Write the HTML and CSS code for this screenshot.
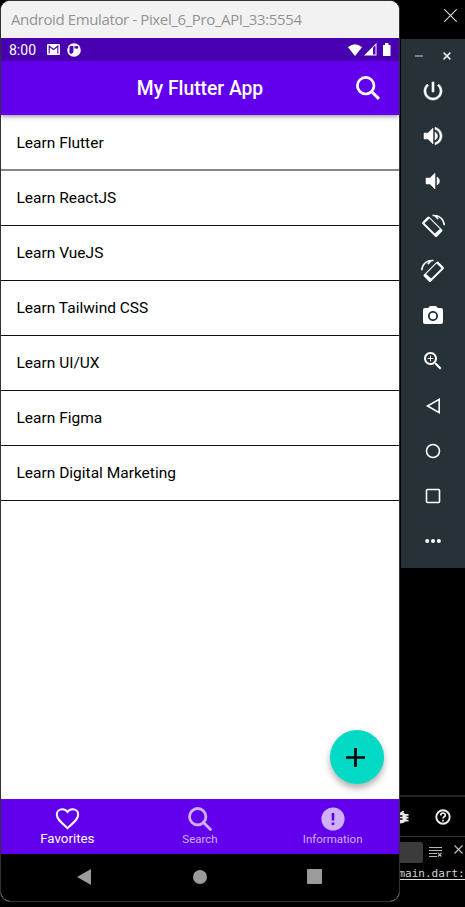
FILE: index.html
```html
<!DOCTYPE html>
<html lang="en">
<head>
<meta charset="utf-8">
<title>Android Emulator</title>
<link rel="stylesheet" href="styles.css">
</head>
<body>
<div class="desktop">
  <main class="phone">
    <header class="titlebar"><span>Android Emulator - Pixel_6_Pro_API_33:5554</span></header>
    <div class="status">
      <span class="clock">8:00</span>
      <svg class="mail" width="13" height="11" viewBox="0 0 13 11"><rect width="13" height="11" rx="1" fill="#fff"/><path d="M2.200 9.500V2.200L6.500 5.500l4.300-3.300v7.300" fill="none" stroke="#4800b0" stroke-width="1.100"/></svg>
      <svg class="badge" width="14" height="14" viewBox="0 0 14 14"><circle cx="7" cy="7" r="6.800" fill="#fff"/><path d="M2.500 4.300Q2.500 3 4 3H6.400V8.200A2.300 2.300 0 0 1 2.500 10Z" fill="#4800b0"/><path d="M7.500 3H8.700V5.500H7.500Z" fill="#4800b0"/><circle cx="9.800" cy="4.400" r="1.400" fill="#4800b0"/></svg>
      <span class="fill"></span>
      <svg width="14" height="12" viewBox="0 0 14 12"><path d="M7 12 0 3.300Q7-2.600 14 3.300Z" fill="#fff"/></svg>
      <svg class="signal" width="13" height="13" viewBox="0 0 13 13"><path d="M0 12.500 12.500 0v12.500Z" fill="#fff"/><path d="M9 4.800 11.500 2.300v9.200H9Z" fill="#4800b0"/></svg>
      <svg class="battery" width="8" height="13" viewBox="0 0 8 13"><path d="M0 2h2V0h3.500v2h2v11H0Z" fill="#fff"/></svg>
    </div>
    <div class="appbar">
      <h1>My Flutter App</h1>
      <svg class="appsearch" width="24" height="24" viewBox="0 0 24 24" fill="none" stroke="#fff" stroke-width="2.700"><circle cx="9.700" cy="9.700" r="8.300"/><path d="m15.500 15.500 7.400 7.400" stroke-width="3"/></svg>
    </div>
    <ul class="list">
      <li>Learn Flutter</li>
      <li>Learn ReactJS</li>
      <li>Learn VueJS</li>
      <li>Learn Tailwind CSS</li>
      <li>Learn UI/UX</li>
      <li>Learn Figma</li>
      <li>Learn Digital Marketing</li>
    </ul>
    <div class="fab"><svg width="19" height="19" viewBox="0 0 19 19"><path d="M9.500 0v19M0 9.500h19" stroke="#000" stroke-width="2.700"/></svg></div>
    <nav class="tabs">
      <div class="tab active">
        <svg width="24" height="24" viewBox="0 0 24 24"><path d="M12.500 21.200 11 19.800C5.500 14.900 1.800 11.500 1.800 7.500 1.800 4.400 4.300 2.200 7.300 2.200c2.100 0 4 1.100 5.200 2.800 1.200-1.700 3.100-2.800 5.200-2.800 3 0 5.500 2.200 5.500 5.300 0 4-3.700 7.400-9.200 12.300Z" fill="none" stroke="#fff" stroke-width="2"/></svg>
        <span>Favorites</span>
      </div>
      <div class="tab">
        <svg width="24" height="24" viewBox="0 0 24 24" fill="none" stroke="#cfb0fb" stroke-width="2.800"><circle cx="9.700" cy="9.700" r="8.200"/><path d="m15.500 15.500 7 7" stroke-linecap="round"/></svg>
        <span>Search</span>
      </div>
      <div class="tab">
        <svg width="24" height="24" viewBox="0 0 24 24"><circle cx="12" cy="12" r="11.600" fill="#cfb0fb"/><path d="M12 6v7.500M12 15.500V18" stroke="#6200ee" stroke-width="2.600"/></svg>
        <span>Information</span>
      </div>
    </nav>
    <div class="sysnav">
      <svg width="14" height="16" viewBox="0 0 14 16"><path d="M14 0v16L0 8Z" fill="#9b9b9b"/></svg>
      <svg width="14" height="14" viewBox="0 0 14 14"><circle cx="7" cy="7" r="7" fill="#9b9b9b"/></svg>
      <svg width="15" height="15" viewBox="0 0 15 15"><rect width="15" height="15" rx="1" fill="#9b9b9b"/></svg>
    </div>
  </main>
  <aside class="side">
    <div class="sidetop"><svg width="13" height="13" viewBox="0 0 13 13"><path d="m.3.300 12.400 12.400M12.700.300.300 12.700" stroke="#ddd" stroke-width="1.100"/></svg></div>
    <div class="tools">
      <div class="winctl">
        <svg width="8" height="8" viewBox="0 0 8 8"><path d="M0 4h8" stroke="#929799" stroke-width="1.600"/></svg>
        <svg width="8" height="8" viewBox="0 0 8 8"><path d="m.6.600 6.800 6.800M7.400.600.600 7.400" stroke="#eee" stroke-width="1.500"/></svg>
      </div>
      <div class="tool"><svg viewBox="0 0 24 24"><path d="M13 3h-2v10h2V3zm4.830 2.170-1.420 1.420C17.990 7.860 19 9.810 19 12c0 3.870-3.130 7-7 7s-7-3.130-7-7c0-2.190 1.010-4.140 2.580-5.420L6.170 5.170C4.230 6.820 3 9.260 3 12c0 4.970 4.030 9 9 9s9-4.030 9-9c0-2.740-1.230-5.180-3.170-6.830z" stroke="#fff" stroke-width=".6"/></svg></div>
      <div class="tool"><svg viewBox="0 0 24 24"><path d="M3 9v6h4l5 5V4L7 9H3zm13.500 3c0-1.770-1.020-3.290-2.500-4.030v8.050c1.480-.730 2.500-2.250 2.500-4.020zM14 3.230v2.060c2.890.860 5 3.540 5 6.710s-2.110 5.850-5 6.710v2.060c4.010-.910 7-4.490 7-8.770s-2.990-7.860-7-8.770z" stroke="#fff" stroke-width=".5"/></svg></div>
      <div class="tool"><svg viewBox="0 0 24 24"><path d="M18.500 12c0-1.770-1.020-3.290-2.500-4.030v8.050c1.480-.730 2.500-2.250 2.500-4.020zM5 9v6h4l5 5V4L9 9H5z" stroke="#fff" stroke-width=".5"/></svg></div>
      <div class="tool"><svg viewBox="0 0 24 24"><path fill-rule="evenodd" d="M6.500 3Q7.500 2 8.500 3L21 15.500Q22 16.500 21 17.500L16 22.500Q15 23.500 14 22.500L1.500 10Q.5 9 1.500 8ZM8.500 4.500 3.500 9.300 13.800 19.600 18.900 14.900Z"/><path d="M11.500 1.600C18 .800 22.800 5 23.300 11.300M13.500 1.500l3.800 3.600" fill="none" stroke="#fff" stroke-width="1.500"/></svg></div>
      <div class="tool"><svg class="mirrored" viewBox="0 0 24 24"><path fill-rule="evenodd" d="M6.500 3Q7.500 2 8.500 3L21 15.500Q22 16.500 21 17.500L16 22.500Q15 23.500 14 22.500L1.500 10Q.5 9 1.500 8ZM8.500 4.500 3.500 9.300 13.800 19.600 18.900 14.900Z"/><path d="M11.500 1.600C18 .800 22.800 5 23.300 11.300M13.500 1.500l3.800 3.600" fill="none" stroke="#fff" stroke-width="1.500"/></svg></div>
      <div class="tool"><svg viewBox="0 0 24 24"><path fill-rule="evenodd" d="M9 2 7.170 4H4c-1.100 0-2 .900-2 2v12c0 1.100.900 2 2 2h16c1.100 0 2-.900 2-2V6c0-1.100-.900-2-2-2h-3.170L15 2H9zm3 15c-2.760 0-5-2.240-5-5s2.240-5 5-5 5 2.240 5 5-2.240 5-5 5z"/><circle cx="12" cy="12" r="3.200"/></svg></div>
      <div class="tool"><svg viewBox="0 0 24 24"><path fill-rule="evenodd" d="M15.500 14h-.790l-.280-.270C15.410 12.590 16 11.110 16 9.500 16 5.910 13.090 3 9.500 3S3 5.910 3 9.500 5.910 16 9.500 16c1.610 0 3.090-.590 4.230-1.570l.270.280v.790l5 4.990L20.490 19l-4.990-5zm-6 0C7.010 14 5 11.990 5 9.500S7.010 5 9.500 5 14 7.010 14 9.500 11.990 14 9.500 14z"/><path d="M9 6.700h1V9h2.300v1H10v2.300H9V10H6.700V9H9z"/></svg></div>
      <div class="tool"><svg viewBox="0 0 24 24" fill="none" stroke="#fff" stroke-width="1.600"><path d="M18.200 5.300v13.400L6.500 12Z"/></svg></div>
      <div class="tool"><svg viewBox="0 0 24 24" fill="none" stroke="#fff" stroke-width="1.600"><circle cx="12" cy="12" r="6.500"/></svg></div>
      <div class="tool"><svg viewBox="0 0 24 24" fill="none" stroke="#fff" stroke-width="1.600"><rect x="5.500" y="5.500" width="13" height="13" rx="1"/></svg></div>
      <div class="tool"><svg viewBox="0 0 24 24"><circle cx="6.200" cy="12" r="2"/><circle cx="12" cy="12" r="2"/><circle cx="17.900" cy="12" r="2"/></svg></div>
    </div>
    <div class="gap"></div>
    <div class="bugrow">
      <svg width="9" height="14" viewBox="0 0 9 14"><path d="M0 2.500 1 2.300 3 .500 4.200 1.600 3.500 2.700 5 4H8.500v1.800H6.500v1H8.500v1.800H6.500v1.200H8.500v1.800H5.500Q3.500 13.500 0 13.500Z" fill="#e8e8e8"/><path d="M0 6h2.500M0 9h2.500" stroke="#000" stroke-width="1.300"/></svg>
      <svg width="16" height="16" viewBox="0 0 16 16" fill="none" stroke="#eee" stroke-width="1.900"><circle cx="8" cy="8" r="6.700"/><path d="M5.700 6.500C5.700 3.200 10.300 3.300 10.300 6.200 10.300 7.800 8 7.800 8 9.600M8 10.700v1.700" stroke-width="1.700"/></svg>
    </div>
    <div class="filterrow">
      <span class="box"></span>
      <svg width="13" height="11" viewBox="0 0 13 11"><path d="M0 1.500h13M0 4.500h13M0 7.500h8M0 10.500h8M9 7l3.500 3.500M12.500 7 9 10.500" stroke="#b5b5b5" stroke-width="1.100" fill="none"/></svg>
      <svg width="9" height="9" viewBox="0 0 9 9"><path d="m.5.500 8 8M8.500.500l-8 8" stroke="#bbb" stroke-width="1.200"/></svg>
    </div>
    <div class="console"><span>main.dart:</span></div>
  </aside>
</div>
</body>
</html>
```
FILE: styles.css
```css
* { box-sizing: border-box; }
body { margin: 0; background: #000; font-family: Roboto, sans-serif; }
svg { display: block; flex: none; }
.desktop { display: grid; grid-template-columns: 400px 65px; height: 907px; overflow: hidden; }
.phone { position: relative; display: flex; flex-direction: column; height: 902px; border: 1px solid #333; border-radius: 10px; background: #fff; overflow: hidden; }
.titlebar { height: 37px; padding-left: 10px; background: #f2f2f2; color: #929292; font: 15px/37px "Open Sans", sans-serif; letter-spacing: -.38px; white-space: nowrap; }
.status { display: flex; align-items: center; height: 23px; padding: 0 8px; background: #4800b0; color: #fff; }
.clock { width: 38px; font-size: 14px; line-height: 25px; height: 23px; }
.badge { margin-left: 7px; }
.fill { flex: 1; }
.signal { margin-left: 2px; }
.battery { margin-left: 6px; }
.appbar { position: relative; z-index: 1; display: grid; grid-template-columns: 55px 1fr 55px; align-items: center; height: 54px; background: #6200ee; color: #fff; box-shadow: 0 2px 4px rgba(0,0,0,.35); }
.appbar h1 { grid-column: 2; margin: 0; text-align: center; font-size: 19.300px; font-weight: 500; height: 54px; line-height: 56px; }
.appsearch { margin-left: 12px; }
.list { flex: 1; margin: 0; padding: 0; list-style: none; }
.list li { height: 55px; padding-left: 15.500px; border-bottom: 1px solid #111; color: #000; font-size: 15.500px; line-height: 55px; }
.list li:first-child { height: 56px; border-bottom: 2px solid #888; line-height: 56px; }
.fab { position: absolute; right: 15.500px; bottom: 117px; display: grid; place-items: center; width: 54px; height: 54px; padding-right: 2px; border-radius: 50%; background: #03dac5; box-shadow: 0 4px 7px rgba(0,0,0,.32); }
.tabs { display: grid; grid-template-columns: repeat(3, 1fr); height: 55px; background: #6200ee; }
.tab { display: flex; flex-direction: column; align-items: center; padding-top: 8px; color: #cfb0fb; font-size: 11.500px; line-height: 16px; }
.tab.active { color: #fff; font-size: 13.300px; }
.sysnav { display: flex; align-items: center; height: 47px; padding: 0 0 2px 76px; background: #000; }
.sysnav svg:nth-child(2) { margin-left: 102px; }
.sysnav svg:nth-child(3) { margin-left: 100px; }
.side { display: flex; flex-direction: column; }
.sidetop { height: 39px; padding: 9px 0 0 44px; }
.tools { height: 529px; margin-left: 1px; background: #273238; }
.winctl { display: flex; align-items: center; justify-content: space-between; height: 29px; padding: 4px 14px 0; }
.tool { display: grid; place-items: center; height: 45px; }
.tool svg { width: 24px; height: 24px; fill: #fff; }
.tool svg[fill="none"] { fill: none; }
.tool .mirrored { transform: scaleX(-1); }
.gap { height: 227px; }
.bugrow { display: flex; align-items: center; justify-content: space-between; height: 42px; padding-right: 14px; border-top: 2px solid #222; border-bottom: 1px solid #333; }
.filterrow { display: flex; align-items: center; height: 28px; }
.box { width: 23px; height: 21px; margin: 2px 6px 0 0; border-radius: 0 2px 2px 0; background: #3b3b3b; }
.filterrow svg:last-child { margin: -3px 0 0 12px; }
.console { height: 18px; margin-left: -1.500px; color: #d4d4d4; font: 11px/18px "DejaVu Sans Mono", monospace; }
.console span { display: block; height: 15px; line-height: 18px; border-bottom: 1px solid #ddd; }
```
